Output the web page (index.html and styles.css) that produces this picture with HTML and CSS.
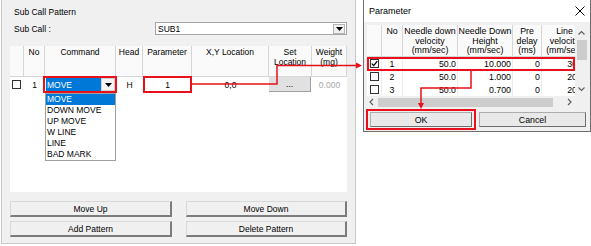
FILE: index.html
```html
<!DOCTYPE html>
<html>
<head>
<meta charset="utf-8">
<link rel="stylesheet" href="styles.css">
</head>
<body>
<div class="screen">
  <section class="panel">
    <div class="title">Sub Call Pattern</div>
    <div class="subcall">
      <span class="label">Sub Call :</span>
      <div class="combo">
        <span>SUB1</span>
        <span class="combo-btn"><svg width="7" height="4" viewBox="0 0 7 4"><path d="M0 0H7L3.5 4Z" fill="#000"/></svg></span>
      </div>
    </div>
    <div class="grid">
      <div class="ghead">
        <div class="hc"></div>
        <div class="hc">No</div>
        <div class="hc">Command</div>
        <div class="hc">Head</div>
        <div class="hc">Parameter</div>
        <div class="hc">X,Y Location</div>
        <div class="hc">Set<br>Location</div>
        <div class="hc">Weight<br>(mg)</div>
      </div>
      <div class="grow">
        <div class="c"><span class="chk"></span></div>
        <div class="c ctr">1</div>
        <div class="c">
          <div class="cmd-combo"><span class="cmd-text">MOVE</span><span class="cmd-btn"><svg width="7" height="4" viewBox="0 0 7 4"><path d="M0 0H7L3.5 4Z" fill="#000"/></svg></span></div>
        </div>
        <div class="c ctr">H</div>
        <div class="c ctr">1</div>
        <div class="c ctr">0,0</div>
        <div class="c"><span class="dots">...</span></div>
        <div class="c ctr muted">0.000</div>
      </div>
      <ul class="dropdown">
        <li class="sel">MOVE</li>
        <li>DOWN MOVE</li>
        <li>UP MOVE</li>
        <li>W LINE</li>
        <li>LINE</li>
        <li>BAD MARK</li>
      </ul>
      <div class="hl hl-cmd"></div>
      <div class="hl hl-param"></div>
    </div>
    <div class="btns">
      <div class="btn">Move Up</div>
      <div class="btn">Move Down</div>
      <div class="btn">Add Pattern</div>
      <div class="btn">Delete Pattern</div>
    </div>
  </section>

  <section class="dialog">
    <div class="dlg-title">
      <span>Parameter</span>
      <svg class="close" width="10" height="10" viewBox="0 0 10 10"><path d="M0.5 0.5L9.5 9.5M9.5 0.5L0.5 9.5" stroke="#000" stroke-width="1"/></svg>
    </div>
    <div class="dlg-body">
      <div class="dgrid">
        <div class="viewport">
          <div class="dhead">
            <div class="hc"></div>
            <div class="hc">No</div>
            <div class="hc">Needle down<br>velocity<br>(mm/sec)</div>
            <div class="hc">Needle Down<br>Height<br>(mm/sec)</div>
            <div class="hc">Pre<br>delay<br>(ms)</div>
            <div class="hc">Line<br>velocity<br>(mm/sec)</div>
          </div>
          <div class="drow">
            <div class="c"><span class="chk on"><svg width="7" height="7" viewBox="0 0 7 7"><path d="M0.8 3.6L2.7 5.6L6.3 1.2" stroke="#000" stroke-width="1.3" fill="none"/></svg></span></div>
            <div class="c ctr">1</div>
            <div class="c num">50.0</div>
            <div class="c num">10.000</div>
            <div class="c num">0</div>
            <div class="c num last">30</div>
          </div>
          <div class="drow">
            <div class="c"><span class="chk"></span></div>
            <div class="c ctr">2</div>
            <div class="c num">50.0</div>
            <div class="c num">1.000</div>
            <div class="c num">0</div>
            <div class="c num last">20</div>
          </div>
          <div class="drow">
            <div class="c"><span class="chk"></span></div>
            <div class="c ctr">3</div>
            <div class="c num">50.0</div>
            <div class="c num">0.700</div>
            <div class="c num">0</div>
            <div class="c num last">20</div>
          </div>
          <div class="hl hl-row"></div>
        </div>
        <div class="vscroll">
          <svg width="13" height="8" viewBox="0 0 13 8"><path d="M3.5 5.5L6.5 2.5L9.5 5.5" stroke="#606060" stroke-width="1.2" fill="none"/></svg>
          <div class="vthumb"></div>
          <svg class="vdown" width="13" height="8" viewBox="0 0 13 8"><path d="M3.5 2.5L6.5 5.5L9.5 2.5" stroke="#606060" stroke-width="1.2" fill="none"/></svg>
        </div>
        <div class="hscroll">
          <svg width="10" height="12" viewBox="0 0 10 12"><path d="M6 3L3 6L6 9" stroke="#606060" stroke-width="1.2" fill="none"/></svg>
          <div class="hthumb"></div>
          <svg class="hright" width="10" height="12" viewBox="0 0 10 12"><path d="M4 3L7 6L4 9" stroke="#606060" stroke-width="1.2" fill="none"/></svg>
        </div>
        <div class="corner"></div>
      </div>
      <div class="dbtns">
        <div class="okwrap"><div class="btn dbtn ok">OK</div></div>
        <div class="btn dbtn cancel">Cancel</div>
      </div>
    </div>
  </section>
</div>

<svg class="wires" width="591" height="246" viewBox="0 0 591 246">
  <polyline points="192,84 277,84 277,65.5 357,65.5" fill="none" stroke="#e8101a" stroke-width="1.5"/>
  <polygon points="356,62.5 362,65.5 356,68.5" fill="#e8101a"/>
  <polyline points="471,70 471,88 421,88 421,104" fill="none" stroke="#e8101a" stroke-width="1.5"/>
  <polygon points="418,103 421,109 424,103" fill="#e8101a"/>
</svg>
</body>
</html>
```

FILE: styles.css
```css
* { box-sizing: border-box; }

body {
  margin: 0;
  width: 591px;
  height: 246px;
  background: #fff;
  font: 8.5px/10px "Liberation Sans", Arial, sans-serif;
  color: #000;
  position: relative;
  overflow: hidden;
}

.screen {
  display: flex;
  align-items: flex-start;
}

/* ---------- left panel ---------- */
.panel {
  margin-left: 1px;
  width: 355px;
  height: 244px;
  background: #f0f0f0;
  border: 1px solid #c9c9c9;
  border-top: 0;
  padding: 0 8px;
  display: flex;
  flex-direction: column;
}

.title {
  margin-top: 7px;
  line-height: 10px;
  padding-left: 4px;
}

.subcall {
  margin-top: 5px;
  height: 13px;
  display: flex;
  align-items: center;
}

.label { padding-left: 4px; }

.combo {
  margin-left: auto;
  width: 192px;
  height: 13px;
  background: #fff;
  border: 1px solid #a5a5a5;
  display: flex;
  align-items: center;
  padding-left: 2px;
}

.combo-btn {
  margin-left: auto;
  margin-right: 1px;
  width: 12px;
  height: 10px;
  background: #f0f0f0;
  border: 1px solid #b4b4b4;
  display: flex;
  align-items: center;
  justify-content: center;
}

.grid {
  margin-top: 11px;
  height: 146px;
  background: #fff;
  position: relative;
}

.ghead, .grow {
  display: grid;
  grid-template-columns: 14px 21px 71px 27px 49px 77px 43px 35px;
}

.ghead {
  height: 31px;
  background: #fafafa;
  border-bottom: 1px solid #d6d6d6;
}

.hc {
  border-right: 1px solid #d6d6d6;
  text-align: center;
  padding-top: 1px;
  line-height: 10px;
  white-space: nowrap;
  overflow: hidden;
}

.grow {
  height: 15px;
  align-items: center;
}

.c {
  height: 100%;
  display: flex;
  align-items: center;
  white-space: nowrap;
}

.ctr { justify-content: center; }
.muted { color: #a8a8a8; }

.chk {
  width: 9px;
  height: 9px;
  margin-left: 2px;
  border: 1px solid #333;
  background: #fff;
  display: flex;
  align-items: center;
  justify-content: center;
}

.cmd-combo {
  flex: 1;
  margin: 0 1px;
  height: 13px;
  background: #0078d7;
  color: #fff;
  display: flex;
  align-items: center;
  padding-left: 1px;
}

.cmd-btn {
  margin-left: auto;
  width: 14px;
  height: 13px;
  background: #f4f4f4;
  border: 1px solid #d0d0d0;
  display: flex;
  align-items: center;
  justify-content: center;
}

.dots {
  flex: 1;
  height: 15px;
  background: #e1e1e1;
  border-right: 1px solid #a0a0a0;
  border-bottom: 1px solid #a0a0a0;
  display: flex;
  align-items: center;
  justify-content: center;
  margin-right: 1px;
}

.dropdown {
  position: absolute;
  left: 35px;
  top: 47px;
  width: 71px;
  height: 68px;
  margin: 0;
  padding: 0;
  list-style: none;
  background: #fff;
  border: 1px solid #a0a0a0;
}

.dropdown li {
  height: 11px;
  line-height: 11px;
  padding-left: 1px;
  white-space: nowrap;
}

.dropdown li.sel {
  background: #0078d7;
  color: #fff;
}

.hl {
  position: absolute;
  border: 2px solid #e8101a;
}

.hl-cmd { left: 33px; top: 30px; width: 74px; height: 17px; }
.hl-param { left: 133px; top: 30px; width: 49px; height: 17px; }

.btns {
  margin-top: 9px;
  display: grid;
  grid-template-columns: 162px 161px;
  column-gap: 14px;
  row-gap: 4px;
}

.btn {
  height: 16px;
  background: #f0f0f0;
  border: 1px solid #d8d8d8;
  border-right: 2px solid #7c7c7c;
  border-bottom: 2px solid #7c7c7c;
  display: flex;
  align-items: center;
  justify-content: center;
  white-space: nowrap;
}

/* ---------- dialog ---------- */
.dialog {
  margin-left: 7px;
  width: 228px;
  height: 132px;
  background: #f0f0f0;
  border: 1px solid #6e6e6e;
  border-top: 0;
  display: flex;
  flex-direction: column;
}

.dlg-title {
  height: 22px;
  background: #fff;
  display: flex;
  align-items: center;
  padding: 0 5px;
  font-size: 9px;
}

.close { margin-left: auto; }

.dlg-body {
  padding: 3px 2px 0 3px;
  font-size: 8.8px;
}

.dgrid {
  display: grid;
  grid-template-columns: 208px 13px;
  grid-template-rows: 71px 12px;
  background: #fff;
}

.viewport {
  overflow: hidden;
  position: relative;
}

.dhead, .drow {
  width: 221px;
  display: grid;
  grid-template-columns: 15px 21px 55px 55px 29px 46px;
}

.dhead {
  height: 32px;
  background: #fafafa;
  border-bottom: 1px solid #d6d6d6;
}

.dhead .hc {
  line-height: 9.6px;
  padding-top: 2px;
}

.drow {
  height: 13px;
}

.drow .c { border-right: 1px solid #ececec; }
.drow .chk { margin-left: 3px; }

.num {
  justify-content: flex-end;
  padding-right: 1px;
}

.last { padding-right: 10px; }

.hl-row { left: 0; top: 32px; width: 208px; height: 14px; }

.vscroll {
  background: #f0f0f0;
  display: flex;
  flex-direction: column;
  align-items: center;
  padding-top: 4px;
}

.vthumb {
  width: 10px;
  height: 20px;
  margin-top: 3px;
  background: #cdcdcd;
}

.vdown { margin-top: auto; margin-bottom: 3px; }

.hscroll {
  background: #f0f0f0;
  display: flex;
  align-items: center;
}

.hthumb {
  margin-left: 1px;
  width: 175px;
  height: 9px;
  background: #cdcdcd;
}

.hright { margin-left: auto; margin-right: 1px; }

.corner { background: #f0f0f0; }

.dbtns {
  margin-top: 1px;
  display: flex;
  align-items: flex-start;
}

.okwrap {
  margin-left: -1px;
  border: 2px solid #e8101a;
  padding: 1px 2px;
}

.dbtn {
  height: 15px;
  background: #e9e9e9;
  border: 1px solid #adadad;
  border-right: 1px solid #6e6e6e;
  border-bottom: 1px solid #6e6e6e;
}

.ok { width: 102px; }
.cancel { width: 107px; margin-left: 3px; margin-top: 3px; }

.wires {
  position: absolute;
  left: 0;
  top: 0;
  pointer-events: none;
}
```
